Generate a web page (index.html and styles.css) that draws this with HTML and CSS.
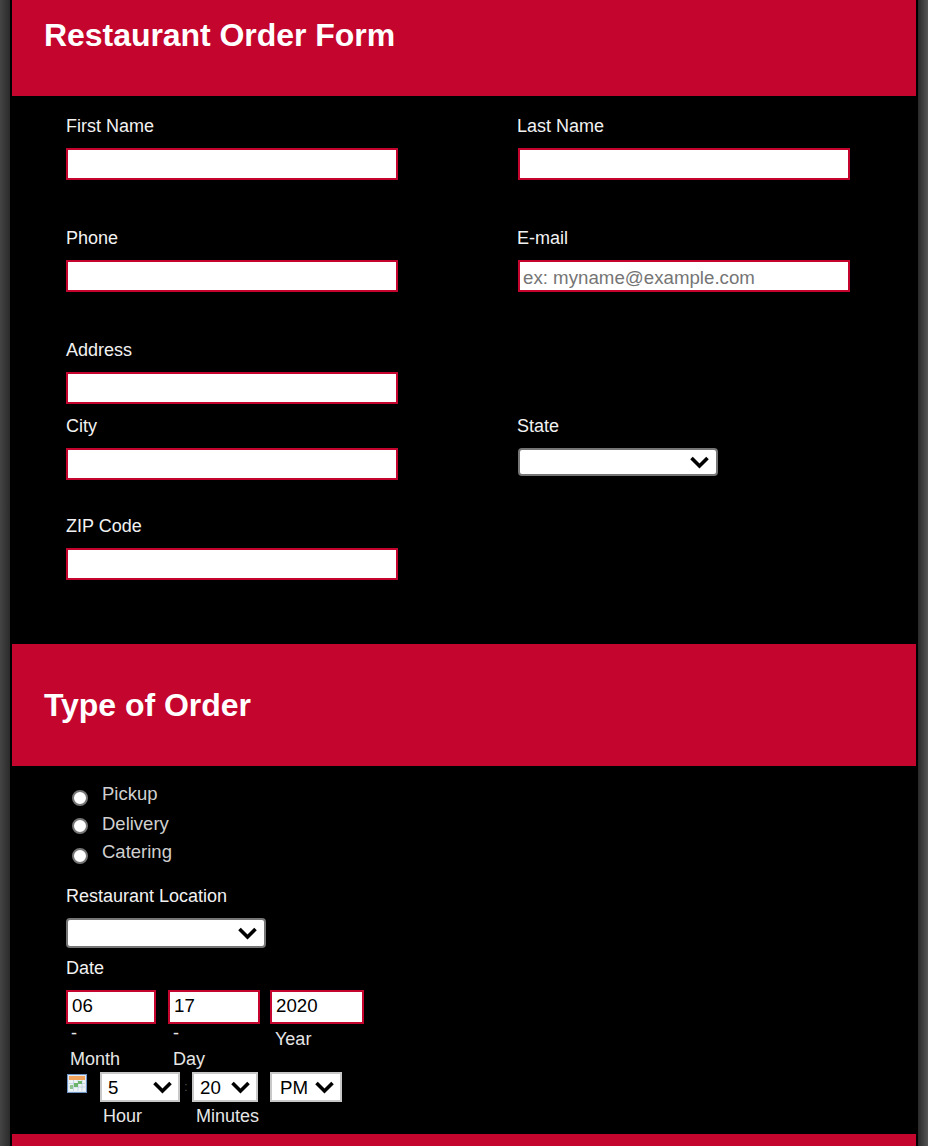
FILE: index.html
```html
<!DOCTYPE html>
<html lang="en">
<head>
<meta charset="utf-8">
<title>Restaurant Order Form</title>
<link rel="stylesheet" href="styles.css">
</head>
<body>
<form class="form">
  <header class="banner banner-top"><h1>Restaurant Order Form</h1></header>
  <section class="contact">
    <div class="field field-row"><label>First Name</label><input class="text" type="text"></div>
    <div class="field field-row col-b"><label>Last Name</label><input class="text" type="text"></div>
    <div class="field field-row"><label>Phone</label><input class="text" type="text"></div>
    <div class="field field-row col-b"><label>E-mail</label><input class="text" type="text" placeholder="ex: myname@example.com"></div>
    <div class="field field-address"><label>Address</label><input class="text" type="text"></div>
    <div class="field field-spacer"></div>
    <div class="field field-city"><label>City</label><input class="text" type="text"></div>
    <div class="field field-city col-b"><label>State</label><select class="dropdown"><option></option></select></div>
    <div class="field field-zip"><label>ZIP Code</label><input class="text" type="text"></div>
  </section>
  <header class="banner banner-mid"><h2>Type of Order</h2></header>
  <section class="order">
    <div class="radios">
      <div class="radio radio-1"><input type="radio" name="type"><span>Pickup</span></div>
      <div class="radio radio-2"><input type="radio" name="type"><span>Delivery</span></div>
      <div class="radio radio-3"><input type="radio" name="type"><span>Catering</span></div>
    </div>
    <div class="field location"><label>Restaurant Location</label><select class="dropdown"><option></option></select></div>
    <div class="field date"><label>Date</label>
      <div class="date-parts">
        <div class="part part-month"><input class="text small" type="text" value="06"><span class="dash">-</span><span class="sub">Month</span></div>
        <div class="part part-day"><input class="text small" type="text" value="17"><span class="dash">-</span><span class="sub">Day</span></div>
        <div class="part part-year"><input class="text small" type="text" value="2020"><span class="sub">Year</span></div>
      </div>
    </div>
    <div class="time">
      <svg class="cal" viewBox="0 0 20 20" width="20" height="20" aria-hidden="true">
        <rect x="0.500" y="0.500" width="19" height="18" fill="#dfe9f5" stroke="#6d93c4"/>
        <rect x="2" y="2" width="16" height="4" fill="#f2a45c"/>
        <rect x="2" y="6" width="16" height="11" fill="#eef3f6"/>
        <path d="M2 9.500h16M2 13h16M6.500 6v11M11 6v11M15 6v11" stroke="#bccfe2" stroke-width="0.800" fill="none"/>
        <rect x="7" y="9" width="4" height="4" fill="#6cb36c"/>
        <rect x="11" y="7" width="4" height="3" fill="#6cb36c"/>
        <rect x="3" y="11" width="3" height="4" fill="#8cc48c"/>
      </svg>
      <div class="time-part t-hour"><select class="pick"><option>5</option></select><span class="sub">Hour</span></div>
      <span class="colon">:</span>
      <div class="time-part t-min"><select class="pick"><option>20</option></select><span class="sub">Minutes</span></div>
      <div class="time-part t-ampm"><select class="pick"><option>PM</option></select></div>
    </div>
  </section>
  <div class="banner banner-end"></div>
</form>
</body>
</html>
```
FILE: styles.css
```css
html, body {
  margin: 0;
  height: 1146px;
  overflow: hidden;
}
body {
  background: linear-gradient(90deg, #454545 0, #2a2a2a 10px, #2a2a2a 918px, #555 928px);
  font-family: "Liberation Sans", Arial, sans-serif;
  font-size: 18px;
  color: #fff;
}
.form {
  margin: 0 10px;
  padding: 0 2px;
  height: 1146px;
  background: #000;
  overflow: hidden;
}
.banner {
  background: #c4052d;
  padding-left: 32px;
  font-weight: bold;
}
.banner h1, .banner h2 {
  margin: 0;
  font-size: 32px;
  line-height: 38px;
  letter-spacing: -0.05px;
}
.banner-top { height: 80px; padding-top: 16px; }
.banner-mid { height: 80px; padding-top: 42px; }
.banner-end { height: 40px; }

.contact {
  display: grid;
  grid-template-columns: 451px 1fr;
  padding: 20px 0 0 54px;
  height: 548px;
  box-sizing: border-box;
  align-content: start;
}
.field label {
  display: block;
  line-height: 20px;
  color: #f2f2f2;
}
.field-row { height: 112px; }
.field-address { height: 76px; }
.field-spacer { height: 76px; }
.field-city { height: 100px; }
.col-b .text, .col-b .dropdown { margin-left: 1px; }
.text {
  display: block;
  box-sizing: border-box;
  width: 332px;
  height: 32px;
  margin-top: 12px;
  padding: 3px 3px 0;
  border: 2px solid #c4052d;
  border-radius: 0;
  background: #fff;
  font: 18.7px "Liberation Sans", Arial, sans-serif;
  color: #000;
  outline: 0;
}
.text::placeholder { color: #757575; opacity: 1; }
.dropdown, .pick {
  appearance: none;
  display: block;
  box-sizing: border-box;
  background-color: #fff;
  background-image: url("data:image/svg+xml,%3Csvg xmlns='http://www.w3.org/2000/svg' width='20' height='14' viewBox='0 0 20 14'%3E%3Cpath d='M1.500 3l8 8 8-8' fill='none' stroke='%23000' stroke-width='3.600'/%3E%3C/svg%3E");
  background-repeat: no-repeat;
  font: 18.7px "Liberation Sans", Arial, sans-serif;
  color: #000;
}
.dropdown {
  width: 200px;
  height: 28px;
  margin-top: 12px;
  border: 2px solid #767676;
  border-radius: 4px;
  background-position: right 6px center;
}
.order {
  height: 368px;
  box-sizing: border-box;
  padding: 17px 0 0 54px;
}
.radios {
  padding-left: 6px;
}
.radio {
  display: flex;
  align-items: flex-start;
  gap: 14px;
  line-height: 22px;
  color: #d0d0d0;
  font-size: 18.5px;
}
.radio-1 { height: 30px; }
.radio-2 { height: 28px; }
.radio-3 { height: 45px; }
.radio input {
  appearance: none;
  box-sizing: border-box;
  width: 16px;
  height: 16px;
  margin: 7px 0 0;
  border: 2px solid #767676;
  border-radius: 50%;
  background: #fff;
}
.radio-2 input { margin-top: 5px; }
.location { height: 72px; }
.location .dropdown { height: 30px; margin-top: 12px; }
.date-parts {
  display: flex;
  gap: 12px;
  margin-top: 12px;
}
.part { width: 90px; }
.part-day { width: 92px; margin-right: -2px; }
.part-year { width: 94px; }
.text.small {
  width: 100%;
  height: 34px;
  margin-top: 0;
  padding: 0 4px 2px;
}
.dash, .sub {
  display: block;
  line-height: 20px;
  color: #e6e6e6;
}
.part-month .dash, .part-day .dash { padding-left: 5px; line-height: 18px; }
.part-month .sub, .part-day .sub { padding-left: 4px; margin-top: 7px; }
.part-day .sub { padding-left: 5px; }
.part-year .sub { padding-left: 5px; margin-top: 5px; }
.part-month, .part-day, .part-year { height: 82px; }
.time {
  display: flex;
  align-items: flex-start;
}
.cal { margin: 0 13px 0 1px; flex: none; position: relative; top: 2px; }
.time-part { flex: none; }
.pick {
  height: 30px;
  border: 2px solid #c8c8c8;
  border-radius: 0;
  padding: 0 0 0 6px;
  background-position: right 5px center;
}
.t-hour .pick { width: 80px; }
.t-min .pick { width: 66px; }
.t-ampm { margin-left: 12px; }
.t-ampm .pick { width: 72px; padding-left: 8px; }
.colon { width: 12px; text-align: center; color: #555; line-height: 30px; font-size: 12px; }
.t-min { margin-right: -1px; }
.time-part .sub { line-height: 20px; margin-top: 4px; padding-left: 3px; }
.t-min .sub { padding-left: 4px; white-space: nowrap; }
```
